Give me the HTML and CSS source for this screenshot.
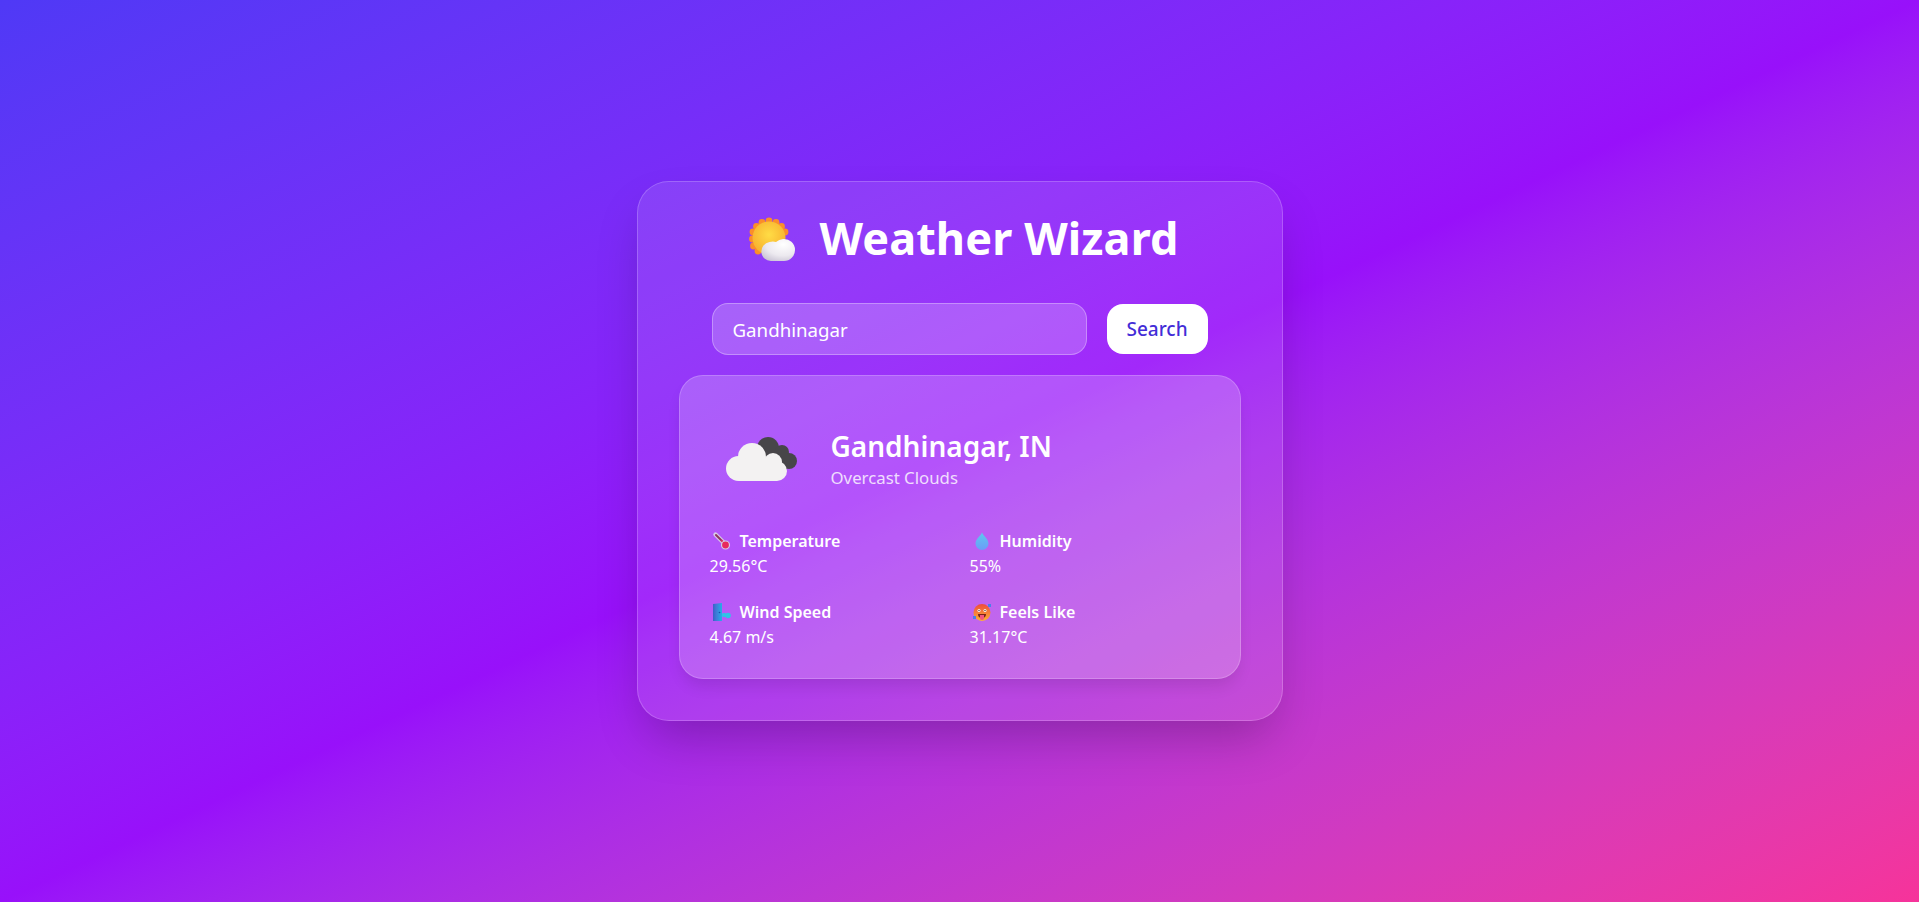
FILE: index.html
```html
<!DOCTYPE html>
<html lang="en">
<head>
<meta charset="utf-8">
<title>Weather Wizard</title>
<link rel="stylesheet" href="styles.css">
</head>
<body>
<main class="card">
  <h1 class="title">
    <svg class="title-icon" viewBox="14 12 48 46" aria-hidden="true">
      <defs>
        <radialGradient id="sun" cx="50%" cy="40%" r="60%"><stop offset="0" stop-color="#ffdc45"/><stop offset="1" stop-color="#f7b02e"/></radialGradient>
        <radialGradient id="puff" cx="65%" cy="25%" r="85%"><stop offset="0" stop-color="#ffffff"/><stop offset=".6" stop-color="#ece9ef"/><stop offset="1" stop-color="#c9c3d3"/></radialGradient>
      </defs>
      <g fill="#fb8e2a">
        <circle cx="34" cy="16" r="3.400"/><circle cx="41" cy="17.500" r="3.400"/><circle cx="46.500" cy="21.500" r="3.400"/><circle cx="50" cy="27" r="3.400"/>
        <circle cx="27" cy="17.500" r="3.400"/><circle cx="21.500" cy="21.500" r="3.400"/><circle cx="18" cy="27" r="3.400"/><circle cx="17.500" cy="34" r="3.400"/><circle cx="18.500" cy="41" r="3.400"/><circle cx="23" cy="46" r="3.400"/>
      </g>
      <circle cx="34" cy="33" r="16.500" fill="url(#sun)"/>
      <path fill="url(#puff)" d="M36 56a9.500 9.500 0 0 1-1.500-18.900a10 10 0 0 1 6.500-.100a12 12 0 0 1 7-3a11 11 0 0 1 12 11a11 11 0 0 1-11 11z"/>
    </svg>
    <span>Weather Wizard</span>
  </h1>

  <form class="search">
    <input class="search-input" type="text" value="Gandhinagar" aria-label="City">
    <button class="search-button" type="button">Search</button>
  </form>

  <section class="results">
    <header class="place">
      <svg class="place-icon" viewBox="10 10 80 56" aria-hidden="true">
        <g fill="#474649">
          <circle cx="57" cy="27" r="11"/><circle cx="71" cy="31" r="7"/><circle cx="78" cy="40" r="8"/><path d="M50 30h26v18H50z"/>
        </g>
        <g fill="#f3f2f2">
          <circle cx="41" cy="36" r="14"/><circle cx="27.500" cy="47.500" r="12.500"/><circle cx="62" cy="41" r="9"/><circle cx="66" cy="50" r="10"/><path d="M28 40h38v20H28z"/>
        </g>
      </svg>
      <div>
        <h2 class="place-name">Gandhinagar, IN</h2>
        <p class="place-desc">Overcast Clouds</p>
      </div>
    </header>
    <div class="stats">
      <div class="stat">
        <div class="stat-label">
          <svg class="stat-icon" viewBox="0 0 20 20" aria-hidden="true">
            <path d="M4.500 3.500 14 13" stroke="#d6cbe6" stroke-width="4.400" stroke-linecap="round"/>
            <path d="M5 4 10 9" stroke="#8e3560" stroke-width="2" stroke-linecap="round"/>
            <path d="M10 9 14 13" stroke="#d92c5c" stroke-width="2.200"/>
            <circle cx="14.500" cy="14" r="4" fill="#e8295e" stroke="#d6cbe6" stroke-width="1.200"/>
          </svg>
          <span>Temperature</span>
        </div>
        <div class="stat-value">29.56°C</div>
      </div>
      <div class="stat">
        <div class="stat-label">
          <svg class="stat-icon" viewBox="0 0 20 20" aria-hidden="true">
            <defs><linearGradient id="drop" x1="0" y1="0" x2="0" y2="1"><stop offset="0" stop-color="#5ec8ef"/><stop offset="1" stop-color="#6c9cf8"/></linearGradient></defs>
            <path fill="url(#drop)" d="M11 1.500c1.800 4 6.500 6.500 6.500 11a6.500 6.500 0 0 1-13 0c0-4.500 4.700-7 6.500-11z"/>
          </svg>
          <span>Humidity</span>
        </div>
        <div class="stat-value">55%</div>
      </div>
      <div class="stat">
        <div class="stat-label">
          <svg class="stat-icon" viewBox="0 0 20 20" aria-hidden="true">
            <defs><linearGradient id="door" x1="0" y1="0" x2="1" y2="0"><stop offset="0" stop-color="#3a5fc8"/><stop offset=".35" stop-color="#3f7ad8"/><stop offset="1" stop-color="#27aee8"/></linearGradient></defs>
            <path fill="url(#door)" d="M2 2l9-1v18H2z"/>
            <circle cx="8.500" cy="10.500" r=".8" fill="#1b4fa8"/>
            <g fill="#2fc4e6"><circle cx="13" cy="13" r="2.200"/><circle cx="17" cy="13.500" r="2.800"/></g>
          </svg>
          <span>Wind Speed</span>
        </div>
        <div class="stat-value">4.67 m/s</div>
      </div>
      <div class="stat">
        <div class="stat-label">
          <svg class="stat-icon" viewBox="0 0 20 20" aria-hidden="true">
            <defs><linearGradient id="hot" x1="0" y1="0" x2="0" y2="1"><stop offset="0" stop-color="#ee4b3c"/><stop offset="1" stop-color="#fdb233"/></linearGradient></defs>
            <circle cx="11" cy="10.500" r="8.500" fill="url(#hot)"/>
            <path fill="#7b2418" d="M7 12h8a4 4 0 0 1-8 0z"/>
            <path fill="#f3577f" d="M9 13h4v3a2 2 0 0 1-4 0z"/>
            <circle cx="8" cy="8.500" r="1.500" fill="#fff"/><circle cx="14" cy="8.500" r="1.500" fill="#fff"/>
            <circle cx="8" cy="8.500" r=".7" fill="#4a2a20"/><circle cx="14" cy="8.500" r=".7" fill="#4a2a20"/>
            <path fill="#4a7fe8" d="M2 14h3v3H2zM17 2h3v3h-3z"/>
          </svg>
          <span>Feels Like</span>
        </div>
        <div class="stat-value">31.17°C</div>
      </div>
    </div>
  </section>
</main>
</body>
</html>
```

FILE: styles.css
```css
* { box-sizing: border-box; }

html, body { height: 100%; }

body {
  margin: 0;
  display: flex;
  align-items: center;
  justify-content: center;
  font-family: "Noto Sans", "Open Sans", sans-serif;
  color: #fff;
  background: linear-gradient(to bottom right in oklab, #4f39f6 0%, #9810fa 50%, #f6339a 100%);
}

.card {
  width: 646px;
  padding: 32px 41px 41px;
  border-radius: 32px;
  border: 1px solid rgba(255, 255, 255, 0.2);
  background: rgba(255, 255, 255, 0.1);
  box-shadow: 0 25px 50px -12px rgba(0, 0, 0, 0.25);
}

.title {
  margin: 0 0 41px;
  padding-left: 9px;
  height: 48px;
  display: flex;
  align-items: center;
  justify-content: center;
  gap: 22px;
  font-size: 45px;
  font-weight: 700;
  line-height: 48px;
  letter-spacing: 0.1px;
}

.title-icon { width: 48px; height: 46px; flex: none; margin-top: 4px; }

.search {
  display: flex;
  gap: 20px;
  padding: 0 33px;
  margin-bottom: 20px;
}

.search-input {
  flex: 1;
  min-width: 0;
  height: 52px;
  padding: 0 20px;
  border-radius: 16px;
  border: 1px solid rgba(255, 255, 255, 0.3);
  background: rgba(255, 255, 255, 0.2);
  color: #fff;
  font: 400 18.700px "Noto Sans", "Open Sans", sans-serif;
  outline: none;
}

.search-button {
  width: 101px;
  height: 50px;
  align-self: center;
  border: 0;
  border-radius: 16px;
  background: #fff;
  color: #432dd7;
  font: 500 19px "Noto Sans", "Open Sans", sans-serif;
}

.results {
  padding: 52px 30px 0;
  height: 304px;
  border-radius: 24px;
  border: 1px solid rgba(255, 255, 255, 0.2);
  background: rgba(255, 255, 255, 0.2);
  box-shadow: 0 10px 15px -3px rgba(0, 0, 0, 0.1);
}

.place {
  display: flex;
  align-items: center;
  gap: 30px;
  padding-left: 11px;
  margin-bottom: 38px;
}

.place-icon { width: 80px; height: 56px; flex: none; }

.place-name {
  margin: 0;
  font-size: 28px;
  font-weight: 600;
  line-height: 36px;
}

.place-desc {
  margin: 2px 0 0;
  font-size: 16.800px;
  line-height: 24px;
  opacity: 0.8;
}

.stats {
  display: grid;
  grid-template-columns: 1fr 1fr;
  column-gap: 20px;
  row-gap: 20px;
}

.stat-label {
  display: flex;
  align-items: center;
  gap: 9px;
  padding-left: 1px;
  height: 26px;
  font-size: 16px;
  font-weight: 600;
}

.stat-icon { width: 20px; height: 20px; flex: none; }

.stat-value {
  font-size: 16px;
  line-height: 25px;
}
```
